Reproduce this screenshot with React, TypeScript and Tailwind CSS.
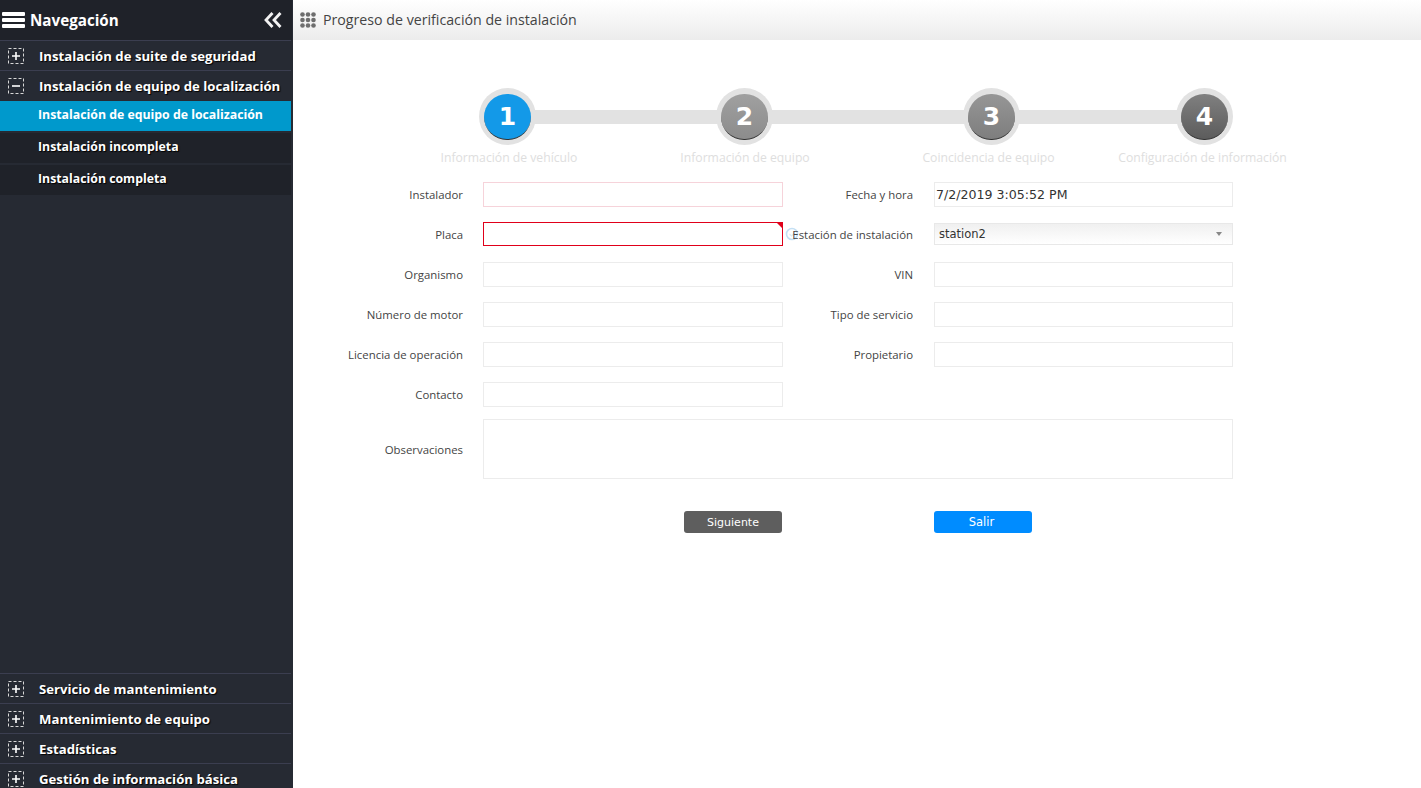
const uiFont = "font-['Open_Sans','Noto_Sans',sans-serif]";

const DashBox = ({ minus = false }: { minus?: boolean }) => (
  <svg width="17" height="17" viewBox="0 0 17 17" fill="none" className="shrink-0">
    <rect x="0.5" y="0.5" width="15" height="15" stroke="#d8d8d8" strokeDasharray="3 2" />
    <path d={minus ? "M4 8h8" : "M4 8h8M8 4v8"} stroke="#ffffff" strokeWidth="1.6" />
  </svg>
);

const MenuRow = ({ label, minus }: { label: string; minus?: boolean }) => (
  <div className="flex h-[30px] w-[291px] items-center border-t border-[#3b3e50] pt-[2px] pl-2 shrink-0">
    <DashBox minus={minus} />
    <span className="ml-[14px] text-[13.2px] font-bold whitespace-nowrap text-white [text-shadow:1px_1px_1px_#000]">
      {label}
    </span>
  </div>
);

const SubRow = ({ label, active }: { label: string; active?: boolean }) => (
  <div
    className={`flex h-[30px] w-[291px] items-center pl-[38px] pb-[2px] text-[12.3px] font-bold whitespace-nowrap text-white shrink-0 ${
      active ? "mt-px bg-[#0099cc]" : "mt-[2px] bg-[#1f2229] [text-shadow:1px_1px_1px_#000]"
    }`}
  >
    {label}
  </div>
);

const Sidebar = () => (
  <aside className="flex h-[788px] w-[293px] shrink-0 flex-col overflow-hidden bg-[#262a33]">
    <div className="flex h-10 w-[292px] shrink-0 items-center bg-[#1f2229] pl-[2px] pr-[10px]">
      <div className="flex h-[16px] w-[23px] flex-col justify-between">
        <div className="h-1 rounded-[1px] bg-white" />
        <div className="h-1 rounded-[1px] bg-white" />
        <div className="h-1 rounded-[1px] bg-white" />
      </div>
      <span className="ml-[5px] text-[15.2px] font-bold text-white">Navegación</span>
      <svg width="18" height="16" viewBox="0 0 18 16" fill="none" className="ml-auto">
        <path d="M8.5 1L2 8l6.5 7M16.5 1L10 8l6.5 7" stroke="#f2f2f2" strokeWidth="2.8" />
      </svg>
    </div>
    <MenuRow label="Instalación de suite de seguridad" />
    <MenuRow label="Instalación de equipo de localización" minus />
    <SubRow label="Instalación de equipo de localización" active />
    <SubRow label="Instalación incompleta" />
    <SubRow label="Instalación completa" />
    <div className="mt-[478px] flex flex-col">
      <MenuRow label="Servicio de mantenimiento" />
      <MenuRow label="Mantenimiento de equipo" />
      <MenuRow label="Estadísticas" />
      <MenuRow label="Gestión de información básica" />
    </div>
  </aside>
);

const Step = ({ n, label, shift, circle }: { n: number; label: string; shift: string; circle: string }) => (
  <div className="flex w-[140px] flex-col items-center">
    <div className="flex h-[57px] w-[57px] items-center justify-center rounded-full bg-[#e2e2e2]">
      <div
        className={`flex h-[46px] w-[47px] items-center justify-center rounded-full border-b border-[#333] pl-px text-[25px] leading-none font-bold text-white font-['DejaVu_Sans',sans-serif] ${circle}`}
      >
        {n}
      </div>
    </div>
    <span className={`mt-[4px] text-[12.2px] whitespace-nowrap text-[#dedede] ${shift}`}>{label}</span>
  </div>
);

const Steps = () => (
  <div className="relative ml-[144px] flex w-[850px] pt-12">
    <div className="absolute top-[70px] left-[70px] h-[14px] w-[700px] bg-[#e2e2e2]" />
    <div className="relative flex">
      <Step n={1} label="Información de vehículo" shift="ml-[4px]" circle="bg-[#1399e8]" />
      <div className="w-[97px]" />
      <Step n={2} label="Información de equipo" shift="ml-[2px]" circle="bg-gradient-to-b from-[#a0a0a0] to-[#8c8c8c]" />
      <div className="w-[107px]" />
      <Step n={3} label="Coincidencia de equipo" shift="-ml-[5px]" circle="bg-gradient-to-b from-[#969696] to-[#7e7e7e]" />
      <div className="w-[73px]" />
      <Step n={4} label="Configuración de información" shift="-ml-[3px]" circle="bg-gradient-to-b from-[#808080] to-[#5c5c5c]" />
    </div>
  </div>
);

const Label = ({ text, width, extra }: { text: string; width: string; extra?: string }) => (
  <label className={`shrink-0 text-right text-[11.4px] whitespace-nowrap text-[#444] ${width} ${extra ?? ""}`}>
    {text}
  </label>
);

const inputCls = "h-[25px] border border-[#ececec] bg-white";

const Field = ({ label, wide, border }: { label: string; wide?: boolean; border?: string }) => (
  <div className="flex items-center">
    <Label text={label} width={wide ? "w-[130px]" : "w-[170px]"} />
    <div className={`${inputCls} ${wide ? "ml-[21px] w-[299px]" : "ml-5 w-[300px]"} ${border ?? ""}`} />
  </div>
);

const Form = () => (
  <div className="mt-[15px] flex w-[940px] flex-col gap-[15px]">
    <div className="flex">
      <Field label="Instalador" border="border-[#f6d3da]" />
      <div className="flex items-center">
        <Label text="Fecha y hora" width="w-[130px]" />
        <div className={`${inputCls} ml-[21px] flex w-[299px] items-center pt-px pl-px font-['DejaVu_Sans',sans-serif] text-[12.6px] text-[#333]`}>
          7/2/2019 3:05:52 PM
        </div>
      </div>
    </div>
    <div className="flex">
      <div className="flex items-center">
        <Label text="Placa" width="w-[170px]" />
        <div className="relative mb-px ml-5 h-[24px] w-[300px] border border-[#e0001a] bg-white">
          <div className="absolute top-0 right-0 h-0 w-0 border-t-[5px] border-l-[5px] border-t-[#e0001a] border-l-transparent" />
          <svg width="14" height="14" viewBox="0 0 14 14" fill="none" className="absolute top-[4px] left-[301px]">
            <circle cx="7" cy="7" r="5.5" stroke="#c4e0f4" strokeWidth="1.6" />
            <path d="M4.5 7l2 2 3-3" stroke="#dcecf8" strokeWidth="1.2" />
          </svg>
        </div>
      </div>
      <div className="relative flex items-center">
        <Label text="Estación de instalación" width="w-[130px]" />
        <div className="mb-px ml-[21px] flex h-[22px] w-[299px] items-center justify-between border border-[#e8e8e8] bg-gradient-to-b from-[#f0f0f0] to-white pr-[10px] pl-[4px] font-['DejaVu_Sans',sans-serif] text-[11.5px] text-[#333]">
          station2
          <div className="h-0 w-0 border-x-[3.5px] border-t-[4px] border-x-transparent border-t-[#888]" />
        </div>
      </div>
    </div>
    <div className="flex">
      <Field label="Organismo" />
      <Field label="VIN" wide />
    </div>
    <div className="flex">
      <Field label="Número de motor" />
      <Field label="Tipo de servicio" wide />
    </div>
    <div className="flex">
      <Field label="Licencia de operación" />
      <Field label="Propietario" wide />
    </div>
    <Field label="Contacto" />
    <div className="-mt-[3px] flex items-center">
      <Label text="Observaciones" width="w-[170px]" extra="pt-px" />
      <div className="ml-5 h-[60px] w-[750px] border border-[#ececec] bg-white" />
    </div>
    <div className="mt-[17px] flex pl-[391px] font-['DejaVu_Sans',sans-serif] text-[11px] text-white">
      <button className="h-[22px] w-[98px] rounded-[3px] bg-[#5e5e5e] pt-px">Siguiente</button>
      <button className="ml-[152px] h-[22px] w-[98px] rounded-[3px] bg-[#008cff] pt-px pr-[3px] text-[11.5px]">Salir</button>
    </div>
  </div>
);

export default function App() {
  return (
    <div className={`flex h-[788px] w-[1421px] overflow-hidden bg-white ${uiFont}`}>
      <Sidebar />
      <main className="min-w-0 flex-1">
        <header className="flex h-10 items-center bg-gradient-to-b from-white to-[#ececec] pl-[7px]">
          <svg width="16" height="16" viewBox="0 0 16 16" fill="#6e6e6e">
            {[2.5, 8, 13.5].map((y) =>
              [2.5, 8, 13.5].map((x) => <circle key={`${x}-${y}`} cx={x} cy={y} r="2.3" />)
            )}
          </svg>
          <span className="ml-[7px] text-[14.2px] text-[#444]">Progreso de verificación de instalación</span>
        </header>
        <Steps />
        <Form />
      </main>
    </div>
  );
}
